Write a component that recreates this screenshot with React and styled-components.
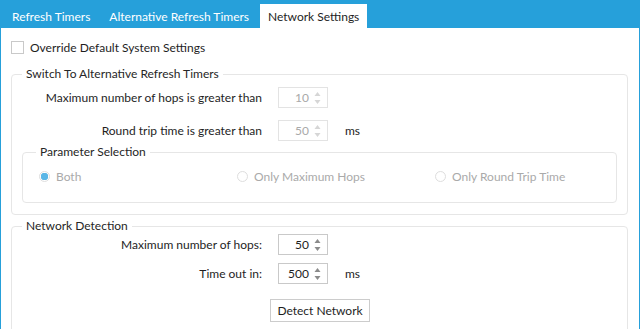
import React from 'react'
import styled, { createGlobalStyle } from 'styled-components'

const GlobalStyle = createGlobalStyle`
	html, body {
		margin: 0;
		padding: 0;
		background: #ffffff;
	}
	body {
		font-family: Lato, 'Noto Sans', sans-serif;
		font-size: 12px;
		color: #1e1e1e;
	}
`

const Frame = styled.div`
	width: 640px;
	height: 329px;
	box-sizing: border-box;
	border-left: 1px solid #26a0da;
	border-right: 1px solid #26a0da;
	overflow: hidden;
	display: flex;
	flex-direction: column;
`

const TabBar = styled.div`
	height: 28px;
	flex: none;
	background: #26a0da;
	display: flex;
	align-items: flex-end;
	padding-left: 3px;
	gap: 3px;
`

const Tab = styled.div`
	height: 24px;
	padding: 0 8px;
	display: flex;
	align-items: center;
	color: ${props => (props.active ? '#1e1e1e' : '#ffffff')};
	background: ${props => (props.active ? '#ffffff' : 'transparent')};
	white-space: nowrap;
`

const Content = styled.div`
	padding: 12px 11px 0 10px;
	display: flex;
	flex-direction: column;
`

const CheckRow = styled.label`
	display: flex;
	align-items: center;
	gap: 6px;
	height: 14px;
	margin-bottom: 13px;
`

const CheckBox = styled.span`
	width: 11px;
	height: 11px;
	border: 1px solid #c9c9c9;
	background: #fff;
`

const Group = styled.fieldset`
	margin: 0;
	padding: 0 0 11px 0;
	border: 1px solid #e6e6e6;
	border-radius: 4px;
	min-width: 0;
	margin-bottom: ${props => props.spacing || 0}px;
`

const Legend = styled.legend`
	margin-left: ${props => props.offset || 10}px;
	padding: 0 4px;
	color: #262626;
	line-height: 14px;
`

const FormGrid = styled.div`
	display: grid;
	grid-template-columns: 250px 50px auto;
	column-gap: 16px;
	row-gap: ${props => props.gap || 12}px;
	align-items: center;
	padding-top: ${props => props.top}px;
`

const Label = styled.span`
	text-align: right;
	white-space: nowrap;
`

const Unit = styled.span`
	padding-left: 1px;
`

const SpinBox = styled.div`
	width: 50px;
	height: 21px;
	box-sizing: border-box;
	border: 1px solid ${props => (props.disabled ? '#e3e3e3' : '#c9c9c9')};
	display: flex;
	align-items: center;
	justify-content: flex-end;
	gap: 5px;
	padding-right: 6px;
	color: ${props => (props.disabled ? '#a9a9a9' : '#1e1e1e')};
`

const Arrows = styled.svg`
	display: block;
`

const Spin = ({ value, disabled }) => (
	<SpinBox disabled={disabled}>
		<span>{value}</span>
		<Arrows width='7' height='14' viewBox='0 0 7 14'>
			<path d='M3.5 1 L6.5 5 L0.5 5 Z' fill={disabled ? '#d6d6d6' : '#8a8a8a'} />
			<path d='M3.5 13 L6.5 9 L0.5 9 Z' fill={disabled ? '#d6d6d6' : '#8a8a8a'} />
		</Arrows>
	</SpinBox>
)

const InnerGroup = styled(Group)`
	margin: 4px 10px 0 10px;
	padding-bottom: 0;
`

const RadioRow = styled.div`
	display: grid;
	grid-template-columns: repeat(3, 198px);
	padding: 10px 0 18px 16px;
`

const RadioItem = styled.div`
	display: flex;
	align-items: center;
	gap: 6px;
	color: #aaaaaa;
`

const RadioDot = styled.span`
	width: 11px;
	height: 11px;
	box-sizing: border-box;
	border-radius: 50%;
	border: 1px solid #dedede;
	background: ${props => (props.checked ? 'radial-gradient(circle, #5ab6e6 0 3.5px, #ffffff 4px)' : '#ffffff')};
`

const ButtonRow = styled.div`
	display: flex;
	padding: 15px 0 0 258px;
`

const Button = styled.button`
	font: inherit;
	color: #1e1e1e;
	background: #ffffff;
	border: 1px solid #cccccc;
	width: 100px;
	height: 23px;
	padding: 0;
`

const App = () => (
	<Frame>
		<GlobalStyle />
		<TabBar>
			<Tab>Refresh Timers</Tab>
			<Tab>Alternative Refresh Timers</Tab>
			<Tab active>Network Settings</Tab>
		</TabBar>
		<Content>
			<CheckRow>
				<CheckBox />
				<span>Override Default System Settings</span>
			</CheckRow>
			<Group spacing={4}>
				<Legend>Switch To Alternative Refresh Timers</Legend>
				<FormGrid top={6}>
					<Label>Maximum number of hops is greater than</Label>
					<Spin value='10' disabled />
					<span />
					<Label>Round trip time is greater than</Label>
					<Spin value='50' disabled />
					<Unit>ms</Unit>
				</FormGrid>
				<InnerGroup>
					<Legend offset={13}>Parameter Selection</Legend>
					<RadioRow>
						<RadioItem><RadioDot checked />Both</RadioItem>
						<RadioItem><RadioDot />Only Maximum Hops</RadioItem>
						<RadioItem><RadioDot />Only Round Trip Time</RadioItem>
					</RadioRow>
				</InnerGroup>
			</Group>
			<Group>
				<Legend>Network Detection</Legend>
				<FormGrid top={1} gap={8}>
					<Label>Maximum number of hops:</Label>
					<Spin value='50' />
					<span />
					<Label>Time out in:</Label>
					<Spin value='500' />
					<Unit>ms</Unit>
				</FormGrid>
				<ButtonRow>
					<Button>Detect Network</Button>
				</ButtonRow>
			</Group>
		</Content>
	</Frame>
)

export default App
